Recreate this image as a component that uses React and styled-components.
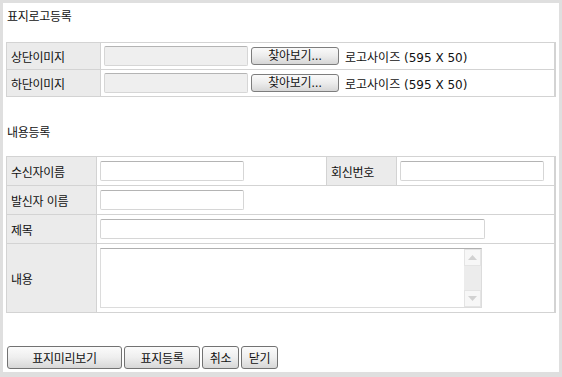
import React from 'react';
import styled, { createGlobalStyle } from 'styled-components';

const GlobalStyle = createGlobalStyle`
  html, body {
    margin: 0;
    padding: 0;
    background: #ffffff;
  }
  * {
    box-sizing: border-box;
  }
  body {
    font-family: "DejaVu Sans", "Noto Sans CJK KR", sans-serif;
    font-size: 12px;
    color: #111;
  }
`;

const Frame = styled.div`
  width: 562px;
  height: 377px;
  border: 3px solid #dfdfdf;
  border-bottom-width: 5px;
  padding-left: 3px;
  background: #fff;
  display: flex;
  flex-direction: column;
`;

const SectionTitle = styled.div`
  height: 16px;
  line-height: 16px;
  padding-left: 1px;
  margin-top: ${props => props.$top}px;
  margin-bottom: ${props => props.$bottom}px;
  font-size: 12px;
  letter-spacing: -0.3px;
`;

const Table = styled.div`
  width: 550px;
  border: 1px solid #d3d3d3;
  border-right-width: 2px;
  display: flex;
  flex-direction: column;
`;

// height is the content height; rows after the first carry a 1px top rule
const Row = styled.div`
  display: flex;
  height: ${props => props.$h + (props.$first ? 0 : 1)}px;
  border-top: ${props => (props.$first ? 'none' : '1px solid #d3d3d3')};
`;

const Label = styled.div`
  width: ${props => props.$w}px;
  flex-shrink: 0;
  background: #ebebeb;
  border-right: 1px solid #d3d3d3;
  border-left: ${props => (props.$sep ? '1px solid #d3d3d3' : 'none')};
  display: flex;
  align-items: center;
  padding-left: 4px;
  font-size: 12px;
  letter-spacing: -0.3px;
  white-space: nowrap;
`;

const Cell = styled.div`
  display: flex;
  align-items: ${props => (props.$top ? 'flex-start' : 'center')};
  padding: ${props => (props.$top ? '4px 0 0 3px' : '0 0 0 3px')};
  width: ${props => (props.$w ? `${props.$w}px` : 'auto')};
  flex: ${props => (props.$w ? '0 0 auto' : '1 1 auto')};
`;

const TextInput = styled.input`
  width: ${props => props.$w}px;
  height: 20px;
  border: 1px solid #d6d6d6;
  border-top-color: #b4b4b4;
  border-radius: 2px;
  background: ${props => (props.$disabled ? '#efefef' : '#ffffff')};
  padding: 0 3px;
  font-family: inherit;
  font-size: 12px;
  outline: none;
`;

const FileButton = styled.button`
  height: 18px;
  width: 88px;
  margin-left: 3px;
  padding: 0;
  border: 1px solid #7d7d7d;
  border-radius: 3px;
  background: linear-gradient(#fafafa, #ececec 50%, #d6d6d6);
  font-family: inherit;
  font-size: 12px;
  line-height: 14px;
  color: #111;
  letter-spacing: -0.3px;
`;

const SizeNote = styled.span`
  margin-left: 6px;
  font-size: 12px;
  white-space: nowrap;
`;

const AreaBox = styled.div`
  width: 382px;
  height: 60px;
  display: flex;
  border: 1px solid #dcdcdc;
  border-top-color: #b0b0b0;
  background: #fff;
`;

const Area = styled.textarea`
  flex: 1;
  border: none;
  resize: none;
  outline: none;
  font-family: inherit;
  font-size: 12px;
  padding: 2px;
  overflow: hidden;
`;

const ScrollTrack = styled.div`
  width: 17px;
  background: #ececec;
  display: flex;
  flex-direction: column;
  justify-content: space-between;
`;

const ScrollArrow = styled.div`
  height: 17px;
  background: #f7f7f7;
  border: 1px solid #e4e4e4;
  display: flex;
  align-items: center;
  justify-content: center;
`;

const ButtonBar = styled.div`
  display: flex;
  gap: 2px;
  margin-top: 33px;
  padding-left: 1px;
`;

const ActionButton = styled.button`
  height: 23px;
  width: ${props => props.$w}px;
  padding: 0;
  border: 1px solid #727272;
  border-radius: 3px;
  background: linear-gradient(#fbfbfb, #eeeeee 50%, #d7d7d7);
  font-family: inherit;
  font-size: 12px;
  color: #111;
  letter-spacing: -0.3px;
`;

const Arrow = ({ up }) => (
  <svg width="9" height="5" viewBox="0 0 9 5">
    <path d={up ? 'M0 5 L4.5 0 L9 5 Z' : 'M0 0 L4.5 5 L9 0 Z'} fill="#d2d2d2" />
  </svg>
);

const LogoRow = ({ label, first }) => (
  <Row $h={26} $first={first}>
    <Label $w={94}>{label}</Label>
    <Cell>
      <TextInput $w={144} $disabled readOnly />
      <FileButton type="button">찾아보기...</FileButton>
      <SizeNote>로고사이즈 (595 X 50)</SizeNote>
    </Cell>
  </Row>
);

export default function App() {
  return (
    <>
      <GlobalStyle />
      <Frame>
        <SectionTitle $top={6} $bottom={17}>표지로고등록</SectionTitle>
        <Table>
          <LogoRow label="상단이미지" first />
          <LogoRow label="하단이미지" />
        </Table>

        <SectionTitle $top={28} $bottom={15}>내용등록</SectionTitle>
        <Table>
          <Row $h={28} $first>
            <Label $w={90}>수신자이름</Label>
            <Cell $w={229}>
              <TextInput $w={144} />
            </Cell>
            <Label $w={71} $sep>회신번호</Label>
            <Cell>
              <TextInput $w={144} />
            </Cell>
          </Row>
          <Row $h={28}>
            <Label $w={90}>발신자 이름</Label>
            <Cell>
              <TextInput $w={144} />
            </Cell>
          </Row>
          <Row $h={28}>
            <Label $w={90}>제목</Label>
            <Cell>
              <TextInput $w={385} />
            </Cell>
          </Row>
          <Row $h={68}>
            <Label $w={90}>내용</Label>
            <Cell $top>
              <AreaBox>
                <Area />
                <ScrollTrack>
                  <ScrollArrow><Arrow up /></ScrollArrow>
                  <ScrollArrow><Arrow /></ScrollArrow>
                </ScrollTrack>
              </AreaBox>
            </Cell>
          </Row>
        </Table>

        <ButtonBar>
          <ActionButton $w={115} type="button">표지미리보기</ActionButton>
          <ActionButton $w={76} type="button">표지등록</ActionButton>
          <ActionButton $w={37} type="button">취소</ActionButton>
          <ActionButton $w={37} type="button">닫기</ActionButton>
        </ButtonBar>
      </Frame>
    </>
  );
}
